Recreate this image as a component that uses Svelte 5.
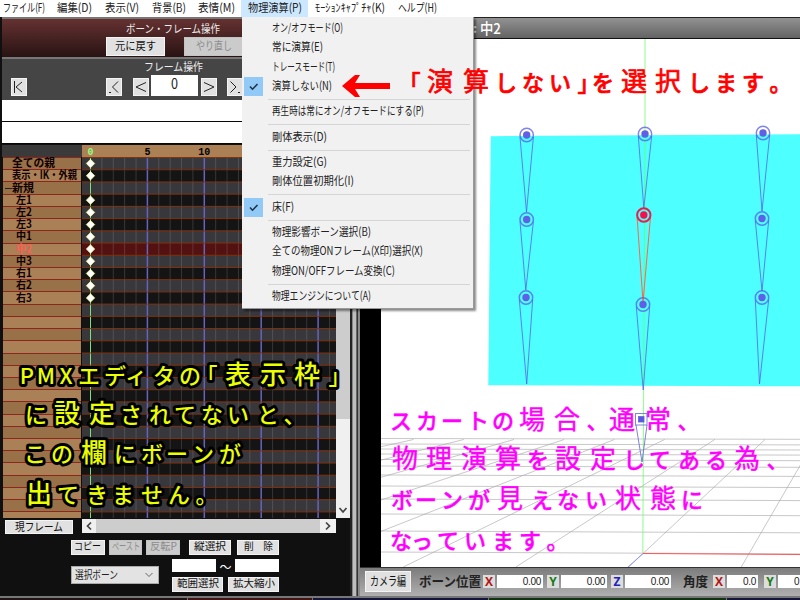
<script lang="ts">
  type Glyph = [string, number]
  type Entry = { text: string; width: number; checked?: boolean }

  const menus: { text: string; width: number; open?: boolean }[] = [
    { text: 'ファイル(F)', width: 42 },
    { text: '編集(D)', width: 35 },
    { text: '表示(V)', width: 34 },
    { text: '背景(B)', width: 34 },
    { text: '表情(M)', width: 37 },
    { text: '物理演算(P)', width: 54, open: true },
    { text: 'ﾓｰｼｮﾝｷｬﾌﾟﾁｬ(K)', width: 70 },
    { text: 'ヘルプ(H)', width: 39 },
  ]

  const groups: Entry[][] = [
    [
      { text: 'オン/オフモード(O)', width: 71 },
      { text: '常に演算(E)', width: 51 },
      { text: 'トレースモード(T)', width: 63 },
      { text: '演算しない(N)', width: 60, checked: true },
    ],
    [{ text: '再生時は常にオン/オフモードにする(P)', width: 152 }],
    [{ text: '剛体表示(D)', width: 55 }],
    [
      { text: '重力設定(G)', width: 55 },
      { text: '剛体位置初期化(I)', width: 82 },
    ],
    [{ text: '床(F)', width: 22, checked: true }],
    [
      { text: '物理影響ボーン選択(B)', width: 99 },
      { text: '全ての物理ONフレーム(X印)選択(X)', width: 151 },
      { text: '物理ON/OFFフレーム変換(C)', width: 123 },
    ],
    [{ text: '物理エンジンについて(A)', width: 99 }],
  ]

  const tracks = ['全ての親', '表示・IK・外親', '新規', '左1', '左2', '左3', '中1', '中2', '中3', '右1', '右2', '右3']
  const trackWidths = [43, 65, 22, 16, 16, 16, 16, 16, 16, 16, 16, 16]
  const selected = 7
  const rowHeight = 12.22
  const rows = Array.from({ length: 30 }, (_, i) => i)
  const frames = Array.from({ length: 22 }, (_, i) => i)
  const frameX = (n: number) => 8.5 + n * 11.38

  const bones = [
    { x: 526.7, y: 135, tx: 526.5, ty: 212 },
    { x: 526.7, y: 219.5, tx: 525.8, ty: 290 },
    { x: 526, y: 297.5, tx: 526.7, ty: 384 },
    { x: 645, y: 134, tx: 643.8, ty: 208 },
    { x: 643.8, y: 215, tx: 643, ty: 302, active: true },
    { x: 643, y: 304.5, tx: 643.2, ty: 390 },
    { x: 763, y: 133, tx: 762, ty: 211 },
    { x: 762, y: 218.5, tx: 762, ty: 291 },
    { x: 762, y: 297.5, tx: 759.5, ty: 384 },
  ]
  const floorRows = [438.5, 444, 449, 454, 459.5, 466, 475, 486, 499, 514, 531, 552]
  const floorCols = [-8, -7, -6, -5, -4, -3, -2, -1, 0, 1]

  const notes: { kind: string; y: number; glyphs: Glyph[] }[] = [
    { kind: 'red', y: 82, glyphs: [['「', 415], ['演', 440], ['算', 476], ['し', 506], ['な', 533], ['い', 560], ['」', 583], ['を', 603], ['選', 634], ['択', 668], ['し', 699], ['ま', 726], ['す', 753], ['。', 775]] },
    { kind: 'yellow', y: 375, glyphs: [['P', 27], ['M', 46], ['X', 66], ['エ', 89], ['デ', 115], ['ィ', 136], ['タ', 164], ['の', 190], ['「', 212], ['表', 238], ['示', 273], ['枠', 307], ['」', 334]] },
    { kind: 'yellow', y: 414, glyphs: [['に', 36], ['設', 67], ['定', 102], ['さ', 131], ['れ', 160], ['て', 185], ['な', 212], ['い', 238], ['と', 268], ['、', 289]] },
    { kind: 'yellow', y: 453, glyphs: [['こ', 35], ['の', 62], ['欄', 94], ['に', 125], ['ボ', 152], ['ー', 177], ['ン', 203], ['が', 230]] },
    { kind: 'yellow', y: 494, glyphs: [['出', 39], ['て', 68], ['き', 97], ['ま', 123], ['せ', 152], ['ん', 179], ['。', 201]] },
    { kind: 'pink', y: 420, glyphs: [['ス', 401], ['カ', 427], ['ー', 452], ['ト', 478], ['の', 503], ['場', 532], ['合', 567], ['、', 592], ['通', 622], ['常', 658], ['、', 683]] },
    { kind: 'pink', y: 459, glyphs: [['物', 405], ['理', 439], ['演', 474], ['算', 508], ['を', 538], ['設', 568], ['定', 603], ['し', 634], ['て', 660], ['あ', 689], ['る', 716], ['為', 747], ['、', 772]] },
    { kind: 'pink', y: 499, glyphs: [['ボ', 402], ['ー', 426], ['ン', 452], ['が', 479], ['見', 510], ['え', 542], ['な', 568], ['い', 596], ['状', 628], ['態', 663], ['に', 692]] },
    { kind: 'pink', y: 540, glyphs: [['な', 401], ['っ', 422], ['て', 448], ['い', 475], ['ま', 503], ['す', 530], ['。', 552]] },
  ]
  const isKanji = (c: string) => /[\u4e00-\u9fff]/.test(c)
  const isMark = (c: string) => '「」、。'.includes(c)
</script>

<!-- text squeezed to a fixed width -->
{#snippet fit(text: string, width: number, size = 12)}
  <svg class="fit" {width} height={size + 2}>
    <text x="0" y={size * 0.9} font-size={size} textLength={width} lengthAdjust="spacingAndGlyphs">{text}</text>
  </svg>
{/snippet}

<div class="app">
  <nav class="menubar">
    {#each menus as menu}
      <div class="menu" class:open={menu.open}>{@render fit(menu.text, menu.width, 11.5)}</div>
    {/each}
  </nav>

  <div class="body">
    <section class="left">
      <div class="history">
        <div class="title">{@render fit('ボーン・フレーム操作', 94, 11)}</div>
        <div class="history-buttons">
          <button>{@render fit('元に戻す', 41, 11)}</button>
          <button disabled>{@render fit('やり直し', 36, 11)}</button>
        </div>
      </div>

      <div class="frame-panel">
        <div class="title">{@render fit('フレーム操作', 59, 11)}</div>
        <div class="frame-nav">
          <button class="first"><svg width="16" height="18"><path d="M3.5 3v12M11 4L5 9l6 5" /></svg></button>
          <button class="prev-key"><svg width="16" height="18"><path d="M12 3.500L6.500 9l5.500 5.500M3 14.500h2" /></svg></button>
          <button class="prev"><svg width="16" height="18"><path d="M13 4.500L3 9l10 4.500" /></svg></button>
          <div class="frame-value">{@render fit('0', 7, 15)}</div>
          <button class="next"><svg width="16" height="18"><path d="M3 4.500L13 9l-10 4.500" /></svg></button>
          <button class="next-key"><svg width="16" height="18"><path d="M3.500 3.500L9 9l-5.500 5.500M11 14.500h2" /></svg></button>
        </div>
        <div class="blank"></div>
        <div class="blank"></div>
      </div>

      <div class="timeline">
        <div class="tracks">
          <div class="corner"></div>
          {#each rows as i}
            <div class="track" class:selected={i === selected} class:group={i === 2} class:top={i < 2}>
              {#if i === 2}<span class="minus"></span>{/if}
              {#if tracks[i]}{@render fit(tracks[i], trackWidths[i], 11)}{/if}
            </div>
          {/each}
        </div>
        <div class="grid">
          <svg width="254" height="373">
            <rect width="268" height="12.500" fill="#aa8054" />
            {#each [0, 5, 10] as n}
              <text class="frame-no" class:now={n === 0} x={frameX(n)} y="10">{n}</text>
            {/each}
            {#each rows as i}
              <rect x="0" y={12.5 + i * rowHeight} width="254" height={rowHeight} fill={i === selected ? '#541111' : i % 2 ? '#141414' : '#38373c'} />
            {/each}
            {#each frames as n}
              <path d="M{frameX(n)} 13V373" class={n === 0 ? 'zero' : n % 5 ? 'tick' : 'five'} />
            {/each}
            {#each rows as i}
              <path d="M0 {12.5 + i * rowHeight}H254" stroke="#80330f" />
            {/each}
            {#each tracks as _, i}
              {#if i !== 2}
                <path d="M{frameX(0)} {14.3 + i * rowHeight}l4.200 4.200-4.200 4.200-4.200-4.200z" fill="#fff" stroke="#ffff90" stroke-width=".7" />
              {/if}
            {/each}
          </svg>
        </div>
        <div class="vscroll">
          <div class="thumb"></div>
          <svg width="14" height="15"><path d="M3.500 5l3.500 4 3.500-4" /></svg>
        </div>
      </div>

      <div class="hrow">
        <button class="current">{@render fit('現フレーム', 48, 11)}</button>
        <div class="hscroll">
          <svg width="14" height="14"><path d="M9 3.500L5.500 7 9 10.500" /></svg>
          <div class="thumb"></div>
          <svg width="16" height="14"><path d="M6 3.500L9.500 7 6 10.500" /></svg>
        </div>
      </div>

      <div class="editing">
        <div class="edit-left">
          <div class="buttons">
            <button>{@render fit('コピー', 27, 10.5)}</button>
            <button disabled>{@render fit('ペースト', 28, 10.5)}</button>
            <button disabled>{@render fit('反転P', 27, 10.5)}</button>
          </div>
          <div class="combo">
            {@render fit('選択ボーン', 43, 11)}
            <svg width="10" height="8"><path d="M1.500 2l3.500 3.500L8.500 2" /></svg>
          </div>
        </div>
        <div class="edit-right">
          <div class="buttons pair">
            <button>{@render fit('縦選択', 32, 10.5)}</button>
            <button>{@render fit('削　除', 29, 10.5)}</button>
          </div>
          <div class="range"><i></i><span>～</span><i></i></div>
          <div class="buttons wide">
            <button>{@render fit('範囲選択', 42, 10.5)}</button>
            <button>{@render fit('拡大縮小', 42, 10.5)}</button>
          </div>
        </div>
      </div>
    </section>

    <div class="splitter"></div>

    <section class="view">
      <header class="view-title"><b>:</b>{@render fit('中2', 21, 15)}</header>
      <div class="stage">
        <svg width="419" height="528" viewBox="381 39 419 528">
          <polygon points="490.700,136.200 800,134.300 800,386.300 488.300,385.200" fill="#4dffff" />
          <g class="floor">
            {#each floorRows as y, i}
              <path d="M381 {y}L800 {y + 0.8 + i * 0.1}" />
            {/each}
            {#each floorCols as k}
              <path d="M{765 + 50.2 * k} 439.500l{(-1.07 + 0.49 * k) * 127.5} 127.500" />
            {/each}
          </g>
          <path d="M645 39V134L642.800 553" stroke="#66ff66" stroke-opacity=".75" fill="none" />
          <path d="M643 553.500L800 554.500" stroke="#ff5555" />
          <path d="M643 553.500L628 567" stroke="#9090ff" />
          {#each bones as b}
            <g class="bone" class:active={b.active}>
              <path d="M{b.x - 6.7} {b.y + 2}L{b.tx} {b.ty}L{b.x + 6.7} {b.y + 2}" />
              <circle class="ring" cx={b.x} cy={b.y} r="6.700" />
              <circle class="dot" cx={b.x} cy={b.y} r="3.700" />
            </g>
          {/each}
        </svg>
      </div>
      <footer class="values">
        <button class="camera">{@render fit('カメラ編', 36, 12)}</button>
        <strong class="position">{@render fit('ボーン位置', 62, 13)}</strong>
        <em class="x">X</em><span class="num">0.00</span>
        <em class="y">Y</em><span class="num">0.00</span>
        <em class="z">Z</em><span class="num">0.00</span>
        <strong class="angle">{@render fit('角度', 25, 13)}</strong>
        <em class="x">X</em><span class="num short">0.0</span>
        <em class="y">Y</em><span class="num short">0.0</span>
      </footer>
    </section>
  </div>

  <div class="panels">
    <div class="dark"></div><div class="maroon"></div><div class="navy"></div><div class="green"></div><div class="navy"></div>
  </div>

  <div class="popup">
    {#each groups as group, i}
      {#if i > 0}<hr />{/if}
      {#each group as entry}
        <div class="entry">
          <span class="check" class:checked={entry.checked}>
            {#if entry.checked}<svg width="19" height="19"><path d="M6 9.500l2.500 2.700L13.500 7" /></svg>{/if}
          </span>
          {@render fit(entry.text, entry.width, 11.5)}
        </div>
      {/each}
    {/each}
  </div>

  <svg class="notes" width="800" height="600">
    <path d="M342 86l13-11h5l-5 8h35v6h-35l5 8h-5z" fill="#f00" />
    {#each notes as note}
      <text class={note.kind} y={note.y + 8.5}>{#each note.glyphs as [char, x]}<tspan {x} class:kanji={isKanji(char)} class:mark={isMark(char)}>{char}</tspan>{/each}</text>
    {/each}
    <g class="center-bone">
      <path d="M636 425l6 37 5-37" />
      <rect x="635.500" y="413.500" width="11.500" height="11.500" />
      <rect x="638.500" y="416.500" width="5.500" height="5.500" class="solid" />
    </g>
  </svg>
</div>

<style>
  :global(body) {
    overflow: hidden;
  }

  .app {
    position: relative;
    display: flex;
    flex-direction: column;
    width: 800px;
    height: 600px;
    overflow: hidden;
    background: #111;
    font-family: 'Noto Sans CJK JP', sans-serif;
    font-size: 12px;
    color: #222;
  }

  svg {
    display: block;
    flex: none;
  }

  .fit {
    overflow: visible;
    fill: currentColor;
  }

  button {
    display: flex;
    align-items: center;
    justify-content: center;
    box-sizing: border-box;
    margin: 0;
    padding: 0;
    border: 1px solid #f4f4f4;
    background: #e1e1e1;
    color: #111;
    font-family: inherit;
  }

  button:disabled {
    border-color: #c4c4c4;
    background: #cbcbcb;
    color: #8b8b8b;
  }

  .menubar {
    display: flex;
    height: 17px;
    background: #fff;
  }

  .menu {
    display: flex;
    align-items: center;
    padding: 0 9px 0 4px;
  }

  .menu:first-child {
    padding: 0 8px 0 3px;
  }

  .menu:nth-child(5) {
    padding: 0 6px 0 3px;
  }

  .menu.open {
    padding: 0 6px 0 7px;
    background: #cce8ff;
  }

  .menu.open + .menu {
    padding: 0 6px 0 7px;
  }

  .menu:last-child {
    padding-left: 7px;
  }

  .body {
    display: flex;
    height: 579px;
  }

  .left {
    width: 350px;
    padding-left: 2px;
    box-sizing: border-box;
    background: #101010;
  }

  .history {
    height: 42px;
    box-sizing: border-box;
    padding-top: 5px;
    border-bottom: 2px solid #777;
    border-top: 2px solid #777;
    background: linear-gradient(#653131, #281313);
  }

  .title {
    display: flex;
    justify-content: center;
    height: 13px;
    margin-top: -1px;
    padding-right: 6px;
    color: #eee;
  }

  .history-buttons {
    display: flex;
    gap: 19px;
    padding: 1px 0 0 104px;
  }

  .history-buttons button {
    width: 59px;
    height: 19px;
  }

  .frame-panel {
    height: 85px;
    padding-top: 3px;
    box-sizing: border-box;
    background: #454545;
  }

  .frame-nav {
    display: flex;
    align-items: flex-end;
    height: 22px;
    padding: 0 0 4px 9px;
  }

  .frame-nav button {
    width: 16px;
    height: 18px;
  }

  .frame-nav path {
    fill: none;
    stroke: #222;
  }

  .frame-nav .prev-key {
    margin-left: 79px;
  }

  .frame-nav .prev {
    margin: 0 2px 0 11px;
  }

  .frame-nav .next {
    margin: 0 10px 0 3px;
  }

  .frame-value {
    display: flex;
    justify-content: center;
    width: 47px;
    height: 21px;
    background: #fff;
  }

  .blank {
    height: 21px;
    border-bottom: 1px solid #080808;
    background: #fff;
  }

  .timeline {
    display: flex;
    height: 374px;
    padding-top: 1px;
    box-sizing: border-box;
    overflow: hidden;
  }

  .tracks {
    width: 80px;
  }

  .corner {
    height: 12px;
    background: #3a3a3a;
  }

  .track {
    display: flex;
    align-items: center;
    height: 12.220px;
    box-sizing: border-box;
    margin: 0 1px;
    padding-left: 13px;
    border-top: 1px solid #8e271b;
    background: #997148;
    color: #100;
    font-weight: 700;
  }

  .track:nth-child(odd) {
    background: #aa8057;
  }

  .track.top {
    padding-left: 9px;
  }

  .track.group {
    padding-left: 2px;
  }

  .track.selected {
    color: #ff5b52;
  }

  .minus {
    width: 7px;
    height: 1px;
    background: #222;
  }

  .grid {
    width: 254px;
  }

  .frame-no {
    font: bold 10px 'Liberation Mono', monospace;
    text-anchor: middle;
  }

  .frame-no.now {
    fill: #90ff80;
  }

  .tick {
    stroke: #aaa;
    stroke-opacity: 0.23;
  }

  .five {
    stroke: #6464bc;
    stroke-width: 1.500;
  }

  .zero {
    stroke: #7be27b;
  }

  .vscroll {
    display: flex;
    flex-direction: column;
    justify-content: space-between;
    width: 14px;
    background: #f0f0f0;
  }

  .vscroll .thumb {
    height: 274px;
    background: #cdcdcd;
  }

  .vscroll path,
  .hscroll path {
    fill: none;
    stroke: #444;
    stroke-width: 1.700;
  }

  .hrow {
    display: flex;
    gap: 9px;
    padding: 1px 0 0 3px;
  }

  .current {
    width: 68px;
    height: 14px;
    margin-top: 1px;
  }

  .hscroll {
    display: flex;
    width: 254px;
    height: 14px;
    background: #f0f0f0;
  }

  .hscroll .thumb {
    flex: 1;
    background: #cdcdcd;
  }

  .editing {
    display: flex;
    gap: 9px;
    padding: 6px 0 0 69px;
  }

  .edit-left {
    width: 109px;
  }

  .buttons {
    display: flex;
    gap: 4px;
  }

  .buttons button {
    width: 34px;
    height: 15px;
  }

  .combo {
    display: flex;
    align-items: center;
    justify-content: space-between;
    width: 88px;
    height: 18px;
    margin-top: 11px;
    padding: 0 4px 0 3px;
    box-sizing: border-box;
    border: 1px solid #aaa;
    background: #e3e3e3;
  }

  .combo path {
    fill: none;
    stroke: #666;
  }

  .edit-right {
    width: 108px;
    margin-left: -17px;
  }

  .pair {
    gap: 6px;
    padding-left: 17px;
  }

  .pair button {
    width: 42px;
  }

  .range {
    display: flex;
    width: 107px;
    height: 13px;
    margin: 4px 0 5px;
    color: #fff;
  }

  .range i {
    flex: 1;
    background: #fff;
  }

  .range span {
    width: 19px;
    line-height: 15px;
    text-align: center;
  }

  .wide {
    gap: 5px;
  }

  .wide button {
    width: 51px;
  }

  .splitter {
    width: 10px;
    background: linear-gradient(90deg, #222 2px, #858585 2px 3px, #bdbdbd 3px 6px, #666 6px 7px, #333 7px 8px, #888 8px);
  }

  .view {
    display: flex;
    flex-direction: column;
    width: 440px;
    background: #000;
  }

  .view-title {
    display: flex;
    align-items: center;
    gap: 3px;
    height: 22px;
    padding-left: 113px;
    box-sizing: border-box;
    border-top: 1px solid #222;
    border-bottom: 1px solid #111;
    background: linear-gradient(#929292, #636363);
    color: #fff;
    font-weight: 500;
  }

  .view-title b {
    width: 4px;
    line-height: 12px;
  }

  .stage {
    height: 528px;
    margin-left: 21px;
    background: #fff;
  }

  .floor path {
    stroke: #aaa;
    stroke-opacity: 0.65;
    fill: none;
  }

  .bone path,
  .ring {
    fill: none;
    stroke: #5a5ae6;
    stroke-opacity: 0.75;
  }

  .ring {
    stroke-width: 1.500;
  }

  .dot {
    fill: #6060e6;
  }

  .active path {
    stroke: #ff6547;
    stroke-opacity: 1;
  }

  .active .ring {
    stroke: #e6204e;
    stroke-opacity: 1;
    stroke-width: 2;
  }

  .active .dot {
    fill: #f5104e;
  }

  .values {
    display: flex;
    align-items: center;
    flex: 1;
    padding: 0 0 1px 5px;
    overflow: hidden;
    border-top: 1px solid #333;
    background: linear-gradient(#7c7c7c, #b0b0b0);
    white-space: nowrap;
  }

  .camera {
    width: 46px;
    height: 21px;
    flex: none;
  }

  .position {
    margin: 0 2px 0 8px;
  }

  .angle {
    margin: 0 5px 0 8px;
  }

  .values em {
    flex: none;
    width: 12px;
    height: 13px;
    background: #ddd;
    font: bold 12px/13px 'Open Sans', sans-serif;
    text-align: center;
  }

  .values .x {
    color: #b31515;
  }

  .values .y {
    color: #157a15;
  }

  .values .z {
    color: #2020c0;
  }

  .num {
    flex: none;
    width: 46px;
    height: 13px;
    margin: 0 4px 0 2px;
    padding-right: 2px;
    box-sizing: border-box;
    background: #fff;
    color: #222;
    font: 10px/14px 'Liberation Sans', sans-serif;
    letter-spacing: -0.300px;
    text-align: right;
  }

  .num.short {
    width: 31px;
    margin-right: 6px;
  }

  .panels {
    display: grid;
    grid-template-columns: 187px 124px 175px 237px 1fr;
    gap: 1px;
    height: 4px;
    padding-top: 1px;
    border-top: 1px solid #777;
    box-sizing: border-box;
    background: #777;
  }

  .dark {
    background: #211414;
  }

  .maroon {
    background: #421414;
  }

  .navy {
    background: #161638;
  }

  .green {
    background: #123312;
  }

  .popup {
    position: absolute;
    left: 242px;
    top: 17px;
    width: 232px;
    height: 292px;
    padding: 2px 0 0 2px;
    box-sizing: border-box;
    border-right: 1px solid #999;
    border-bottom: 1px solid #999;
    background: #f1f1f1;
    box-shadow: 2px 2px 2px rgba(0, 0, 0, 0.45);
  }

  .entry {
    display: flex;
    align-items: center;
    gap: 9px;
    height: 19.350px;
  }

  .check {
    width: 19px;
    height: 19px;
  }

  .check.checked {
    background: #91c9f7;
  }

  .check path {
    fill: none;
    stroke: #234;
    stroke-width: 1.600;
  }

  hr {
    height: 1px;
    margin: 2.500px 3px 2.500px 24px;
    border: 0;
    background: #d5d5d5;
  }

  .notes {
    position: absolute;
    left: 0;
    top: 0;
  }

  .notes text {
    font-size: 22px;
    font-weight: 500;
    text-anchor: middle;
    stroke-linejoin: round;
    stroke-linecap: round;
  }

  .notes .kanji {
    font-size: 26px;
    font-weight: 400;
  }

  .notes .mark {
    font-feature-settings: 'halt';
  }

  .red {
    fill: #f00;
    stroke: #f00;
    stroke-width: 0.700;
  }

  .pink {
    fill: #f0f;
    stroke: #f0f;
    stroke-width: 0.400;
  }

  .yellow {
    fill: #eaff00;
    stroke: #000;
    stroke-width: 6;
    paint-order: stroke;
  }

  .yellow .kanji {
    font-weight: 500;
  }

  .center-bone path,
  .center-bone rect {
    fill: none;
    stroke: #6262d8;
    stroke-opacity: 0.8;
  }

  .center-bone .solid {
    fill: #5858e0;
  }
</style>
